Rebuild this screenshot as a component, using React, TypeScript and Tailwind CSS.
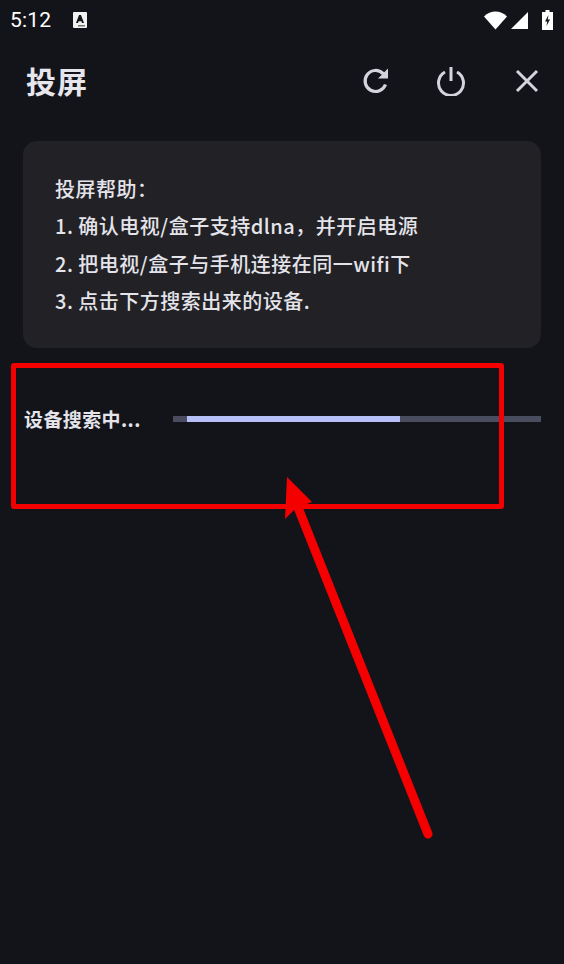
import React from 'react';

const cjk = "font-['Noto_Sans_CJK_SC',sans-serif]";

const helpLines: string[] = [
  '投屏帮助：',
  '1. 确认电视/盒子支持dlna，并开启电源',
  '2. 把电视/盒子与手机连接在同一wifi下',
  '3. 点击下方搜索出来的设备.',
];

const StatusBar: React.FC = () => (
  <div className="flex h-10 items-center justify-between pl-[10px] pr-[11px] text-white">
    <div className="flex items-center gap-[22px]">
      <span className="font-['Roboto',sans-serif] text-[21px] leading-none tracking-[0.2px]">5:12</span>
      <svg width="14" height="16" viewBox="0 0 14 16">
        <rect width="14" height="16" rx="1" fill="#f2f2f2" />
        <path d="M3 11 L6 3 H8 L11 11 H9 L8.4 9.3 H5.6 L5 11 Z" fill="#15161c" />
        <rect x="5" y="13" width="7" height="1.5" fill="#777" />
      </svg>
    </div>
    <div className="flex items-center">
      <svg width="24" height="19" viewBox="0 0 24 19">
        <path d="M0 5.5 C6.5 -1.2 16.5 -1.2 23 5.5 L11.5 18.5 Z" fill="#fff" />
      </svg>
      <svg width="18" height="18" viewBox="0 0 18 18" className="ml-[3px]">
        <path d="M17 1 V18 H0 Z" fill="#fff" />
      </svg>
      <svg width="11" height="20" viewBox="0 0 11 20" className="ml-[13px]">
        <path d="M3.5 0 H7.5 V2 H11 V20 H0 V2 H3.5 Z" fill="#fff" />
        <path d="M6.5 5 L3 11.5 H5.2 L4.5 16 L8 9.5 H5.8 Z" fill="#15161c" />
      </svg>
    </div>
  </div>
);

const Header: React.FC = () => (
  <div className="flex h-[82px] items-center justify-between pl-[26px] pr-[25px]">
    <h1 className={`${cjk} -mt-[2px] text-[30px] font-bold leading-none tracking-[1px] text-[#e6e6ec]`}>投屏</h1>
    <div className="flex items-center text-[#d4d4dc]">
      <svg width="28" height="28" viewBox="0 0 28 28" fill="none" stroke="currentColor" strokeWidth="3.2">
        <path d="M23.5 17.5 A10.5 10.5 0 1 1 21 6.5 L24 9.5" />
        <path d="M26 1.5 V11.5 H16 Z" fill="currentColor" stroke="none" />
      </svg>
      <svg width="30" height="30" viewBox="0 0 30 30" fill="none" stroke="currentColor" strokeWidth="3" className="ml-[46px]">
        <path d="M15 1 V15" />
        <path d="M9 6 A12.5 12.5 0 1 0 21 6" />
      </svg>
      <svg width="24" height="24" viewBox="0 0 24 24" fill="none" stroke="currentColor" strokeWidth="3" className="ml-[49px]">
        <path d="M2 2 L22 22 M22 2 L2 22" />
      </svg>
    </div>
  </div>
);

const App: React.FC = () => {
  return (
    <div className={`${cjk} relative h-[964px] w-[564px] overflow-hidden bg-[#13141a]`}>
      <StatusBar />
      <Header />

      <div className="mx-[23px] mt-[19px] h-[207px] rounded-[14px] bg-[#212126] pl-[32px] pt-[29px]">
        {helpLines.map((line) => (
          <p key={line} className="h-[37.4px] text-[20px] font-medium leading-[37.4px] tracking-[0.5px] text-[#e4e4ea]">
            {line}
          </p>
        ))}
      </div>

      <div className="mt-[57px] flex items-center pl-[24px] pr-[23px]">
        <span className="w-[149px] shrink-0 text-[19px] font-bold leading-[28px] tracking-[0.4px] text-[#e4e4ea]">设备搜索中...</span>
        <div className="h-[6px] flex-1 bg-[#4a4c60] pl-[14px]">
          <div className="h-full w-[213px] bg-[#b8c0f8]" />
        </div>
      </div>

      {/* red annotation drawn over the screenshot */}
      <div className="absolute left-[11px] top-[363px] h-[146px] w-[493px] rounded-[3px] border-[5.5px] border-[#f40000]" />
      <svg className="absolute left-0 top-0" width="564" height="964" viewBox="0 0 564 964" fill="none">
        <path d="M297 505 L428 834" stroke="#f40000" strokeWidth="9" strokeLinecap="round" />
        <path d="M287 477 L312 502 L296 508 L285 519 Z" fill="#f40000" />
      </svg>
    </div>
  );
};

export default App;
